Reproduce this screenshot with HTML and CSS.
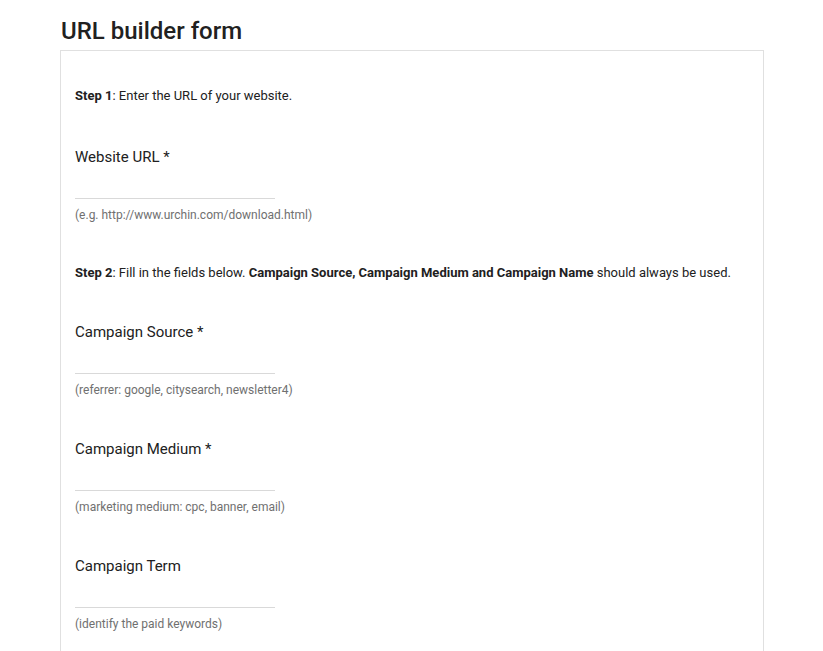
FILE: index.html
```html
<!DOCTYPE html>
<html>
<head>
<meta charset="utf-8">
<link rel="stylesheet" href="styles.css">
</head>
<body>
<div class="page">
  <h1 class="title">URL builder form</h1>
  <div class="card">
    <p class="step step-first"><b>Step 1</b>: Enter the URL of your website.</p>
    <div class="field">
      <label class="label">Website URL *</label>
      <input class="input" type="text">
      <div class="help">(e.g. http://www.urchin.com/download.html)</div>
    </div>
    <p class="step"><b>Step 2</b>: Fill in the fields below. <b>Campaign Source, Campaign Medium and Campaign Name</b> should always be used.</p>
    <div class="field">
      <label class="label">Campaign Source *</label>
      <input class="input" type="text">
      <div class="help">(referrer: google, citysearch, newsletter4)</div>
    </div>
    <div class="field">
      <label class="label">Campaign Medium *</label>
      <input class="input" type="text">
      <div class="help">(marketing medium: cpc, banner, email)</div>
    </div>
    <div class="field">
      <label class="label">Campaign Term</label>
      <input class="input" type="text">
      <div class="help">(identify the paid keywords)</div>
    </div>
  </div>
</div>
</body>
</html>
```
FILE: styles.css
```css
html, body {
  margin: 0;
  padding: 0;
  background: #ffffff;
}
body {
  font-family: Roboto, "Liberation Sans", sans-serif;
  color: #212121;
}
.page {
  width: 704px;
  margin-left: 60px;
  padding-top: 17px;
}
.title {
  margin: 0 0 5px 1px;
  font-size: 24px;
  line-height: 28px;
  font-weight: 500;
  color: #212121;
}
.card {
  border: 1px solid #e0e0e0;
  padding: 36px 14px 0 14px;
  min-height: 700px;
}
.step {
  margin: 0 0 40px 0;
  font-size: 13px;
  line-height: 18px;
  color: #212121;
}
.step-first {
  margin-bottom: 42px;
}
.step b {
  font-weight: 700;
}
.field {
  display: flex;
  flex-direction: column;
  align-items: flex-start;
  margin-bottom: 41px;
}
.label {
  font-size: 15px;
  line-height: 20px;
  color: #212121;
}
.input {
  width: 200px;
  height: 32px;
  box-sizing: border-box;
  border: none;
  border-bottom: 1px solid #d9d9d9;
  margin: 0;
  padding: 0;
  background: transparent;
  outline: none;
}
.help {
  margin-top: 9px;
  font-size: 12px;
  line-height: 15px;
  color: #707070;
}
```
